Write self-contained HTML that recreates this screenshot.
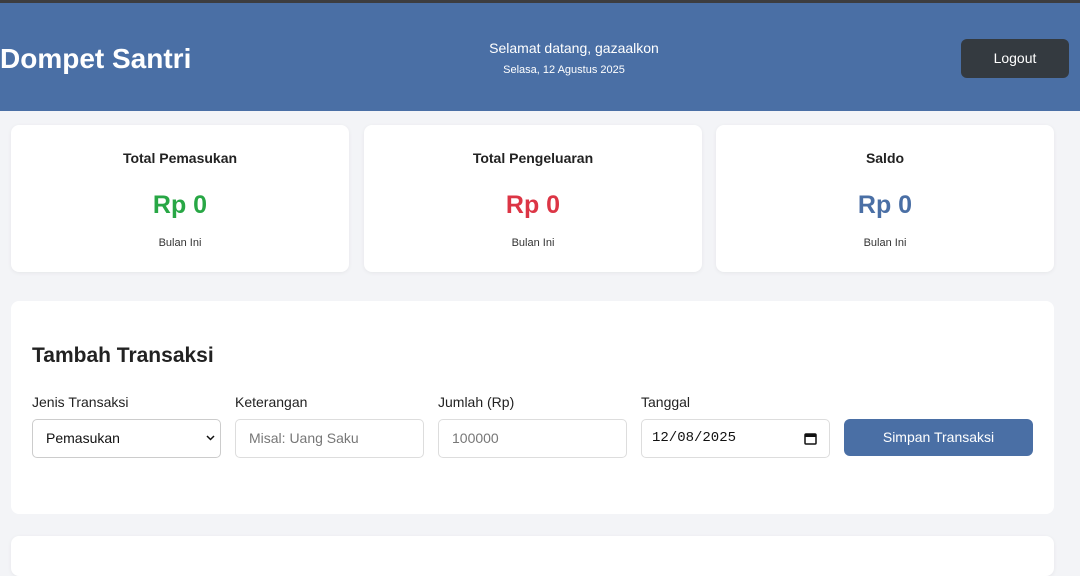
<!DOCTYPE html>
<html><head><meta charset="utf-8"><style>
*{box-sizing:border-box;margin:0;padding:0}
body{width:1080px;height:562px;overflow:hidden;background:#f3f4f7;font-family:"Liberation Sans",sans-serif;color:#333}
.top{height:3px;background:#3d3d3f}
header{height:108px;background:#4a6fa5;position:relative;color:#fff}
header h1{position:absolute;left:0;top:40px;font-size:28px;font-weight:bold}
.wel{position:absolute;left:0;width:1148px;text-align:center;top:37px;font-size:14px}
.date{position:absolute;left:0;width:1128px;text-align:center;top:61px;font-size:11px}
.logout{position:absolute;left:961px;top:36px;width:108px;height:39px;background:#343a40;border-radius:6px;color:#fff;font-size:14px;text-align:center;line-height:39px}
.card{position:absolute;background:#fff;border-radius:8px;box-shadow:0 1px 4px rgba(0,0,0,.06);text-align:center}
.card h3{font-size:14px;font-weight:bold;margin-top:25px;color:#222}
.card .v{font-size:25px;font-weight:bold;margin-top:25px}
.card p{font-size:11px;margin-top:17px}
.form{position:absolute;left:11px;top:301px;width:1043px;height:213px;background:#fff;border-radius:8px}
.form h2{position:absolute;left:21px;top:43px;font-size:21px;font-weight:bold;color:#222}
.lbl{position:absolute;top:93px;font-size:14px;color:#222}
.inp{position:absolute;top:118px;width:189px;height:39px;border:1px solid #ddd;border-radius:5px;font-size:14px;line-height:37px;padding-left:13px;color:#777}
.btn{position:absolute;left:833px;top:118px;width:189px;height:37px;background:#4a6fa5;border-radius:6px;color:#fff;font-size:14px;text-align:center;line-height:37px}
</style></head><body>
<div class="top"></div>
<header><h1>Dompet Santri</h1><div class="wel">Selamat datang, gazaalkon</div><div class="date">Selasa, 12 Agustus 2025</div><div class="logout">Logout</div></header>
<div class="card" style="left:11px;top:125px;width:338px;height:147px"><h3>Total Pemasukan</h3><div class="v" style="color:#28a745">Rp 0</div><p>Bulan Ini</p></div>
<div class="card" style="left:364px;top:125px;width:338px;height:147px"><h3>Total Pengeluaran</h3><div class="v" style="color:#dc3545">Rp 0</div><p>Bulan Ini</p></div>
<div class="card" style="left:716px;top:125px;width:338px;height:147px"><h3>Saldo</h3><div class="v" style="color:#4a6fa5">Rp 0</div><p>Bulan Ini</p></div>
<div class="form">
<h2>Tambah Transaksi</h2>
<div class="lbl" style="left:21px">Jenis Transaksi</div>
<div class="lbl" style="left:224px">Keterangan</div>
<div class="lbl" style="left:427px">Jumlah (Rp)</div>
<div class="lbl" style="left:630px">Tanggal</div>
<div class="inp" style="left:21px;color:#111;border-color:#ccc">Pemasukan<svg style="position:absolute;right:5px;top:15px" width="9" height="6" viewBox="0 0 9 6"><path d="M1 1l3.5 3.5L8 1" fill="none" stroke="#111" stroke-width="1.5"/></svg></div>
<div class="inp" style="left:224px">Misal: Uang Saku</div>
<div class="inp" style="left:427px">100000</div>
<div class="inp" style="left:630px;color:#111;font-family:'Liberation Mono',monospace;padding-left:10px">12/08/2025<svg style="position:absolute;right:12px;top:12px" width="13" height="13" viewBox="0 0 13 13"><rect x="1" y="2" width="11" height="10" rx="1" fill="none" stroke="#111" stroke-width="1.5"/><rect x="1" y="2" width="11" height="3" fill="#111"/></svg></div>
<div class="btn">Simpan Transaksi</div>
</div>
<div class="card" style="left:11px;top:536px;width:1043px;height:40px"></div>
</body></html>
